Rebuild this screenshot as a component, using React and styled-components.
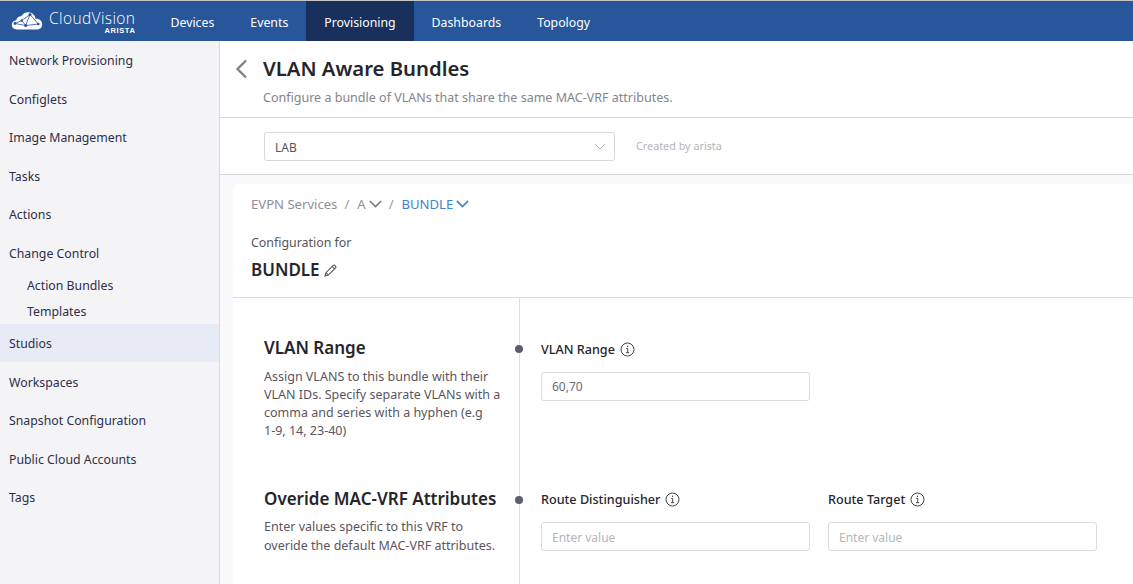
import React from "react";
import styled, { createGlobalStyle } from "styled-components";

const Global = createGlobalStyle`
  html, body { margin: 0; padding: 0; height: 100%; overflow: hidden; background: #fff; }
  * { box-sizing: border-box; }
  body { font-family: "Noto Sans", "Open Sans", sans-serif; color: #2b2b33; }
`;

const Page = styled.div`
  width: 1133px; height: 584px; overflow: hidden;
  display: flex; flex-direction: column;
  border-top: 1px solid #c4c4c4;
`;
const Nav = styled.header`
  height: 40px; flex: none; background: #27569b; display: flex; align-items: stretch;
`;
const Brand = styled.div`
  width: 152.500px; flex: none; padding-left: 11px; display: flex; align-items: center; gap: 6px; color: #fff;
`;
const BrandText = styled.div`
  display: flex; flex-direction: column; align-items: flex-end; line-height: 1; margin-top: 1px;
`;
const BrandName = styled.span`
  font-family: "Open Sans", sans-serif; font-size: 15.500px; font-weight: 300; letter-spacing: .4px; line-height: 17px;
`;
const BrandSub = styled.span`
  font-family: "Liberation Sans", sans-serif; font-size: 7.500px; font-weight: 700; letter-spacing: .6px; line-height: 7px;
`;
const NavItem = styled.div`
  padding: 2px 18px 0; display: flex; align-items: center; font-size: 12.300px; color: #fff;
  background: ${p => (p.$active ? "#18305b" : "transparent")};
`;
const Body = styled.div`
  flex: 1; display: flex; min-height: 0;
`;
const Side = styled.aside`
  width: 220px; flex: none; background: #f4f4f7; border-right: 1px solid #d9d9de; padding-top: 0.5px;
`;
const SideItem = styled.div`
  height: 38.500px; padding-left: 9px; display: flex; align-items: center; font-size: 12.300px; color: #2e2e4a;
`;
const ActiveSideItem = styled(SideItem)`
  height: 38px; margin-bottom: .75px; background: #e6ebf5;
`;
const SideChild = styled.div`
  height: 26px; padding-left: 27px; display: flex; align-items: center; font-size: 12.300px; color: #2e2e4a;
`;
const SideChildren = styled.div`
  margin-top: -0.5px;
`;
const Main = styled.main`
  flex: 1; min-width: 0; display: flex; flex-direction: column;
`;
const TitleBar = styled.div`
  height: 77px; flex: none; border-bottom: 1px solid #d9d9d9; padding: 14px 0 0 14px; display: flex; gap: 15px;
`;
const BackIcon = styled.svg`
  width: 14px; height: 20px; margin-top: 4px; flex: none;
`;
const TitleText = styled.div`
  display: flex; flex-direction: column;
`;
const Title = styled.h1`
  margin: 0; font-size: 20.300px; line-height: 27px; font-weight: 600; color: #25252b;
`;
const Subtitle = styled.p`
  margin: 7px 0 0; font-size: 12.520px; line-height: 17px; color: #84848c;
`;
const SelectBar = styled.div`
  height: 57px; flex: none; border-bottom: 1px solid #d9d9d9; padding-left: 44px; display: flex; align-items: center; gap: 21px;
`;
const Select = styled.div`
  width: 351px; height: 29px; border: 1px solid #d8d8dc; border-radius: 3px; display: flex; align-items: center; justify-content: space-between; padding: 2px 8px 0 10px; font-size: 12px; color: #55555e;
`;
const Created = styled.span`
  font-size: 10.800px; color: #b5b5ba; margin-bottom: 2px;
`;
const Canvas = styled.div`
  flex: 1; min-height: 0; background: #f9f9fb; padding: 9px 0 0 13px;
`;
const Card = styled.section`
  height: 100%; background: #fff; border-top-left-radius: 6px; display: flex; flex-direction: column;
`;
const CardHead = styled.div`
  height: 114px; flex: none; border-bottom: 1px solid #dcdcdc; padding: 10px 0 0 18px;
`;
const Crumbs = styled.div`
  display: flex; align-items: center; height: 20px; font-size: 13.100px; color: #8f8f97;
`;
const Sep = styled.span`
  margin: 0 8px 0 7px; color: #9a9aa2;
`;
const CrumbLink = styled.span`
  color: #3d84d6;
`;
const Configuration = styled.div`
  margin-top: 19px; font-size: 12.400px; line-height: 20px; color: #55555e;
`;
const NameRow = styled.div`
  margin-top: 5px; display: flex; align-items: center; gap: 4px; font-size: 17px; line-height: 24px; font-weight: 600; color: #25252b;
`;
const Rows = styled.div`
  flex: 1; display: grid; grid-template-columns: 287px 1fr; grid-template-rows: 150.800px 1fr;
`;
const Info = styled.div`
  padding: 38px 14px 0 31px;
  border-right: 1px solid #e0e0e0;
  position: relative;
`;
const Dot = styled.span`
  position: absolute; right: -4px; top: 47px; width: 8px; height: 8px; border-radius: 50%; background: #5a5f6b;
`;
const InfoTitle = styled.h2`
  margin: 0; font-size: 17px; line-height: 24px; font-weight: 600; color: #25252b;
`;
const InfoText = styled.p`
  margin: 7.600px 0 0; font-size: 12.500px; line-height: 18.300px; color: #5a5560;
`;
const NoWrap = styled.span`
  white-space: nowrap;
`;
const Fields = styled.div`
  padding: 41px 0 0 21px; display: flex; gap: 18px; align-items: flex-start;
`;
const Field = styled.div`
  width: 269px;
`;
const Label = styled.div`
  display: flex; align-items: center; gap: 5px; height: 19.600px; padding-top: .8px; font-size: 12.600px; font-weight: 500; color: #25252b;
`;
const Input = styled.div`
  margin-top: 13px; height: 29px; border: 1px solid #dcdcdf; border-radius: 3px; padding: 1px 10px 0; display: flex; align-items: center; font-size: 12px; color: ${p => (p.$placeholder ? "#b5b5ba" : "#6a6a72")};
`;

const Logo = () => (
  <svg width="32" height="20" viewBox="0 0 32 20" fill="none">
    <path d="M6 18.500C2.800 18.500 .8 16.400 .8 13.800c0-2.500 1.900-4.400 4.300-4.600C6 6.400 8 5 10.300 5.200 12 2.400 15 1 17.800 1.300c3.800.4 6.300 3.200 6.700 6.500 3.700-.2 6.700 2 6.700 5.700 0 3-2.500 5-5.500 5z" fill="#fff" />
    <g stroke="#27569b" strokeWidth=".8">
      <path d="M4 12.500 10.700 9.500 19 3.500 27.300 13 14.700 14.500 4 12.500M10.700 9.500 14.700 14.500 19 3.500" />
    </g>
    <g fill="#27569b">
      <circle cx="4" cy="12.500" r="1.400" /><circle cx="14.700" cy="14.500" r="1.500" /><circle cx="27.300" cy="13" r="1.300" /><circle cx="10.700" cy="9.500" r="1.200" /><circle cx="19" cy="3.500" r="1.500" />
    </g>
  </svg>
);
const ChevronDown = ({ size = 12, color = "#777", w = 1.4 }) => (
  <svg width={size} height={size * 0.6} viewBox="0 0 12 7" fill="none" stroke={color} strokeWidth={w} style={{ flex: "none", marginLeft: 3 }}>
    <path d="M.8.8 6 6 11.200.8" />
  </svg>
);
const Pencil = () => (
  <svg width="13" height="13" viewBox="0 0 12 12" fill="none" stroke="#555" strokeWidth="1">
    <path d="M1 11l.8-3L8.500 1.300a1 1 0 0 1 1.400 0l.8.8a1 1 0 0 1 0 1.400L4 10.200zM7.500 2.300l2.200 2.200M1.800 8 4 10.200" />
  </svg>
);
const InfoIcon = () => (
  <svg width="15" height="15" viewBox="0 0 15 15" fill="none" stroke="#44444c" strokeWidth="1">
    <circle cx="7.500" cy="7.500" r="6.500" />
    <path d="M6.300 6.500h1.400v4M6 10.700h3.200M7.500 3.700v1.300" />
  </svg>
);

const sideTop = ["Network Provisioning", "Configlets", "Image Management", "Tasks", "Actions", "Change Control"];
const sideBottom = ["Workspaces", "Snapshot Configuration", "Public Cloud Accounts", "Tags"];

export default function App() {
  return (
    <Page>
      <Global />
      <Nav>
        <Brand>
          <Logo />
          <BrandText>
            <BrandName>CloudVision</BrandName>
            <BrandSub>ARISTA</BrandSub>
          </BrandText>
        </Brand>
        <NavItem>Devices</NavItem>
        <NavItem>Events</NavItem>
        <NavItem $active>Provisioning</NavItem>
        <NavItem>Dashboards</NavItem>
        <NavItem>Topology</NavItem>
      </Nav>
      <Body>
        <Side>
          {sideTop.map(t => <SideItem key={t}>{t}</SideItem>)}
          <SideChildren>
            <SideChild>Action Bundles</SideChild>
            <SideChild>Templates</SideChild>
          </SideChildren>
          <ActiveSideItem>Studios</ActiveSideItem>
          {sideBottom.map(t => <SideItem key={t}>{t}</SideItem>)}
        </Side>
        <Main>
          <TitleBar>
            <BackIcon viewBox="0 0 14 20" fill="none" stroke="#808080" strokeWidth="2.300"><path d="M12 1.500 3.500 10l8.500 8.500" /></BackIcon>
            <TitleText>
              <Title>VLAN Aware Bundles</Title>
              <Subtitle>Configure a bundle of VLANs that share the same MAC-VRF attributes.</Subtitle>
            </TitleText>
          </TitleBar>
          <SelectBar>
            <Select>LAB<ChevronDown color="#b5b5ba" w={1} /></Select>
            <Created>Created by arista</Created>
          </SelectBar>
          <Canvas>
            <Card>
              <CardHead>
                <Crumbs>
                  EVPN Services<Sep>/</Sep>A<ChevronDown size={13} color="#777" /><Sep>/</Sep>
                  <CrumbLink>BUNDLE</CrumbLink><ChevronDown size={13} color="#3d84d6" w={1.6} />
                </Crumbs>
                <Configuration>Configuration for</Configuration>
                <NameRow>BUNDLE<Pencil /></NameRow>
              </CardHead>
              <Rows>
                <Info>
                  <InfoTitle>VLAN Range</InfoTitle>
                  <InfoText>Assign VLANS to this bundle with their VLAN IDs. Specify separate VLANs with a comma and series with a hyphen (e.g <NoWrap>1-9,</NoWrap> 14, <NoWrap>23-40)</NoWrap></InfoText>
                  <Dot />
                </Info>
                <Fields>
                  <Field>
                    <Label>VLAN Range <InfoIcon /></Label>
                    <Input>60,70</Input>
                  </Field>
                </Fields>
                <Info>
                  <InfoTitle>Overide MAC-VRF Attributes</InfoTitle>
                  <InfoText>Enter values specific to this VRF to overide the default MAC-VRF attributes.</InfoText>
                  <Dot />
                </Info>
                <Fields>
                  <Field>
                    <Label>Route Distinguisher <InfoIcon /></Label>
                    <Input $placeholder>Enter value</Input>
                  </Field>
                  <Field>
                    <Label>Route Target <InfoIcon /></Label>
                    <Input $placeholder>Enter value</Input>
                  </Field>
                </Fields>
              </Rows>
            </Card>
          </Canvas>
        </Main>
      </Body>
    </Page>
  );
}
